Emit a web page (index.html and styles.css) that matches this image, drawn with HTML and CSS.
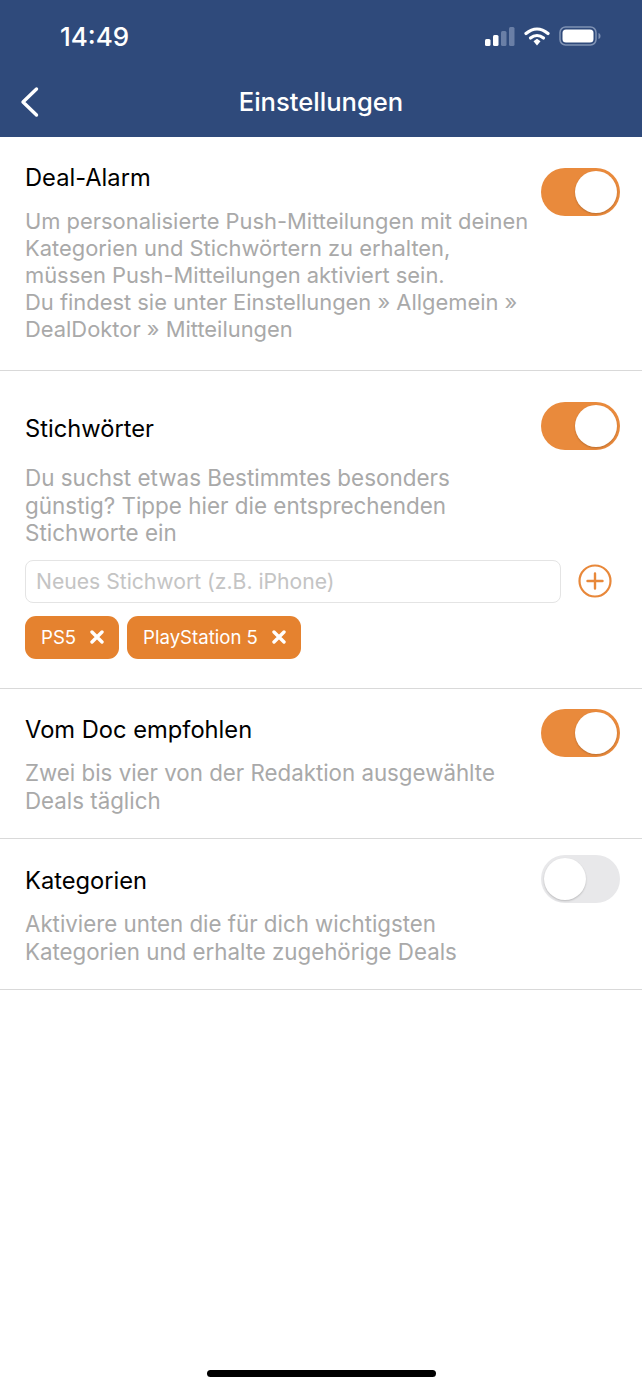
FILE: index.html
```html
<!DOCTYPE html>
<html lang="de">
<head>
    <meta charset="UTF-8">
    <meta name="viewport" content="width=device-width, initial-scale=1.0">
    <title>Einstellungen</title>
    <link rel="stylesheet" href="styles.css">
</head>
<body>
    <header class="top">
        <div class="status">
            <span class="time">14:49</span>
            <div class="status-icons">
                <svg class="signal" width="30" height="19" viewBox="0 0 30 19">
                    <rect x="0" y="12" width="5.500" height="7" rx="1.500" fill="#fff"/>
                    <rect x="8" y="8" width="5.500" height="11" rx="1.500" fill="#fff"/>
                    <rect x="16" y="4" width="5.500" height="15" rx="1.500" fill="#6a7fa6"/>
                    <rect x="24" y="0" width="5.500" height="19" rx="1.500" fill="#6a7fa6"/>
                </svg>
                <svg class="wifi" width="26" height="19" viewBox="0 0 26 19">
                    <path d="M2 6.500C9 .5 17 .5 24 6.500" fill="none" stroke="#fff" stroke-width="3.200" stroke-linecap="round"/>
                    <path d="M6.500 11C10.500 7.700 15.500 7.700 19.500 11" fill="none" stroke="#fff" stroke-width="3.200" stroke-linecap="round"/>
                    <path d="M9.500 14.300 13 11.800 16.500 14.300 13 18.500Z" fill="#fff"/>
                </svg>
                <svg class="battery" width="42" height="20" viewBox="0 0 42 20">
                    <rect x="1" y="1" width="36" height="18" rx="5.500" fill="none" stroke="#7f92b4" stroke-width="1.500"/>
                    <rect x="3.500" y="3.500" width="31" height="13" rx="3.500" fill="#fff"/>
                    <path d="M39.500 7C41 7.500 41.500 8.500 41.500 10C41.500 11.500 41 12.500 39.500 13Z" fill="#7f92b4"/>
                </svg>
            </div>
        </div>
        <div class="navbar">
            <svg class="back" width="22" height="32" viewBox="0 0 22 32">
                <path d="M17.500 3 4 16 17.500 29" fill="none" stroke="#fff" stroke-width="3.400" stroke-linecap="round" stroke-linejoin="round"/>
            </svg>
            <h1>Einstellungen</h1>
        </div>
    </header>

    <section class="block block-alarm">
        <div class="row">
            <div class="text">
                <h2>Deal-Alarm</h2>
                <p>Um personalisierte Push-Mitteilungen mit deinen<br>Kategorien und Stichwörtern zu erhalten,<br>müssen Push-Mitteilungen aktiviert sein.<br>Du findest sie unter Einstellungen » Allgemein »<br>DealDoktor » Mitteilungen</p>
            </div>
            <div class="toggle on"><span class="knob"></span></div>
        </div>
    </section>

    <section class="block block-keywords">
        <div class="row">
            <div class="text">
                <h2>Stichwörter</h2>
                <p>Du suchst etwas Bestimmtes besonders<br>günstig? Tippe hier die entsprechenden<br>Stichworte ein</p>
            </div>
            <div class="toggle on"><span class="knob"></span></div>
        </div>
        <div class="add-row">
            <div class="input">Neues Stichwort (z.B. iPhone)</div>
            <svg class="add" width="34" height="34" viewBox="0 0 34 34">
                <circle cx="17" cy="17" r="15.500" fill="none" stroke="#e8883a" stroke-width="2.200"/>
                <path d="M9.500 17H24.500M17 9.500V24.500" fill="none" stroke="#e8883a" stroke-width="2.400" stroke-linecap="round"/>
            </svg>
        </div>
        <div class="tags">
            <span class="tag">PS5
                <svg width="14" height="14" viewBox="0 0 14 14"><path d="M2 2 12 12M12 2 2 12" stroke="#fff" stroke-width="3.400" stroke-linecap="round"/></svg>
            </span>
            <span class="tag">PlayStation 5
                <svg width="14" height="14" viewBox="0 0 14 14"><path d="M2 2 12 12M12 2 2 12" stroke="#fff" stroke-width="3.400" stroke-linecap="round"/></svg>
            </span>
        </div>
    </section>

    <section class="block block-doc">
        <div class="row">
            <div class="text">
                <h2>Vom Doc empfohlen</h2>
                <p>Zwei bis vier von der Redaktion ausgewählte<br>Deals täglich</p>
            </div>
            <div class="toggle on"><span class="knob"></span></div>
        </div>
    </section>

    <section class="block block-cats">
        <div class="row">
            <div class="text">
                <h2>Kategorien</h2>
                <p>Aktiviere unten die für dich wichtigsten<br>Kategorien und erhalte zugehörige Deals</p>
            </div>
            <div class="toggle"><span class="knob"></span></div>
        </div>
    </section>

    <div class="home-bar"></div>
</body>
</html>
```

FILE: styles.css
```css
* {
    box-sizing: border-box;
}
body {
    margin: 0;
    height: 1389px;
    position: relative;
    overflow: hidden;
    background-color: #fff;
    font-family: Inter, "Liberation Sans", sans-serif;
    color: #000;
}
.top {
    height: 137px;
    background-color: #2f4a7b;
    color: #fff;
}
.status {
    height: 72px;
    padding: 0 41px 0 60px;
    display: flex;
    align-items: center;
    justify-content: space-between;
}
.time {
    font-size: 26px;
    font-weight: 500;
}
.status-icons {
    display: flex;
    align-items: center;
    gap: 9px;
}
.navbar {
    height: 65px;
    padding-bottom: 6px;
    position: relative;
    display: flex;
    align-items: center;
    justify-content: center;
}
.navbar h1 {
    margin: 0;
    font-size: 25.600px;
    font-weight: 500;
}
.back {
    position: absolute;
    left: 19px;
    top: 14px;
}
.block {
    padding: 26px 22px 0 25px;
    border-bottom: 1px solid #d9d9d9;
}
.block-alarm {
    height: 234px;
}
.block-keywords {
    height: 318px;
    padding-top: 43px;
}
.block-doc {
    height: 150px;
}
.block-cats {
    height: 151px;
    padding-top: 27px;
}
.row {
    display: flex;
    justify-content: space-between;
    align-items: flex-start;
}
.text {
    min-width: 0;
    white-space: nowrap;
}
.text h2 {
    margin: 0;
    font-size: 23.700px;
    line-height: 30px;
    font-weight: 400;
}
.text p {
    margin: 14px 0 0;
    font-size: 22.300px;
    line-height: 27.500px;
    color: #a9a9a9;
}
.block-alarm .text p {
    margin-top: 15px;
    font-size: 21.900px;
    line-height: 27px;
}
.block-keywords .text p {
    margin-top: 20px;
    font-size: 22.450px;
}
.toggle {
    flex: none;
    width: 79px;
    height: 48px;
    border-radius: 24px;
    background-color: #e8e8ea;
    padding: 3px;
    display: flex;
    justify-content: flex-start;
}
.toggle.on {
    background-color: #e98a3c;
    justify-content: flex-end;
}
.knob {
    width: 42px;
    height: 42px;
    border-radius: 50%;
    background-color: #fff;
    box-shadow: 0 1px 2px rgba(0,0,0,0.2);
}
.block-alarm .toggle {
    margin-top: 5px;
}
.block-keywords .toggle {
    margin-top: -12px;
}
.block-doc .toggle {
    margin-top: -6px;
}
.block-cats .toggle {
    margin-top: -11px;
}
.add-row {
    margin-top: 13px;
    display: flex;
    align-items: center;
    gap: 17px;
}
.input {
    width: 536px;
    height: 43px;
    padding: 0 10px;
    border: 1px solid #e4e4e4;
    border-radius: 8px;
    font-size: 21.150px;
    line-height: 41px;
    color: #c4c4c4;
}
.tags {
    margin-top: 13px;
    display: flex;
    gap: 8px;
}
.tag {
    height: 43px;
    padding: 0 15px 0 16px;
    border-radius: 11px;
    background-color: #e5822f;
    color: #fff;
    font-size: 18.600px;
    display: flex;
    align-items: center;
    gap: 14px;
}
.home-bar {
    position: absolute;
    left: 207px;
    top: 1370px;
    width: 229px;
    height: 7px;
    border-radius: 4px;
    background-color: #000;
}
```
